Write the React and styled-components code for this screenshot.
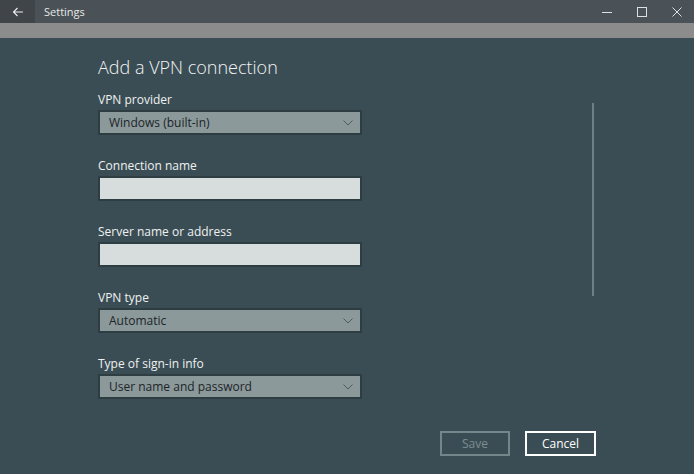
import React from "react";
import styled, { createGlobalStyle } from "styled-components";

const Global = createGlobalStyle`
  html, body { margin: 0; padding: 0; }
  body {
    width: 694px; height: 474px; overflow: hidden;
    background: #3b4d54;
    font-family: "Open Sans", "Noto Sans", "Liberation Sans", sans-serif;
  }
`;

const Window = styled.div`
  width: 694px;
  height: 474px;
  display: flex;
  flex-direction: column;
  background: #3b4d54;
`;

const TitleBar = styled.div`
  height: 23px;
  display: flex;
  align-items: center;
  background: #4a5157;
  color: #e8e8e8;
`;

const BackButton = styled.div`
  width: 35px;
  height: 23px;
  display: flex;
  align-items: center;
  justify-content: center;
  background: #3f4549;
`;

const Title = styled.div`
  margin-left: 9px;
  font-size: 11px;
  flex: 1;
`;

const CaptionButton = styled.div`
  width: 35px;
  height: 23px;
  display: flex;
  align-items: center;
  justify-content: center;
`;

const Band = styled.div`
  height: 15px;
  background: #8c8c8c;
`;

const Body = styled.div`
  flex: 1;
  display: flex;
  flex-direction: column;
  padding: 0 98px;
`;

const ScrollRow = styled.div`
  display: flex;
  height: 376px;
`;

const Form = styled.div`
  flex: 1;
  display: flex;
  flex-direction: column;
  padding-top: 16px;
`;

const Heading = styled.h1`
  margin: 0 0 12px;
  font-size: 18px;
  line-height: 26px;
  font-weight: 300;
  color: #f2f4f4;
`;

const Group = styled.div`
  display: flex;
  flex-direction: column;
  width: 264px;
  margin-bottom: 23px;
`;

const Label = styled.div`
  font-size: 12px;
  line-height: 16px;
  color: #eef1f1;
  margin-bottom: 2px;
`;

const Select = styled.div`
  box-sizing: border-box;
  height: 25px;
  display: flex;
  align-items: center;
  justify-content: space-between;
  padding: 0 7px 0 9px;
  background: #8b999b;
  border: 2px solid #2e3d42;
  font-size: 12px;
  color: #1c2427;
`;

const Input = styled.div`
  box-sizing: border-box;
  height: 25px;
  background: #d7dddd;
  border: 2px solid #2e3d42;
`;

const ScrollTrack = styled.div`
  width: 2px;
  height: 193px;
  margin-top: 65px;
  margin-right: 2px;
  background: #6f7f83;
`;

const Footer = styled.div`
  display: flex;
  justify-content: flex-end;
  gap: 15px;
  margin-top: 17px;
`;

const Button = styled.div`
  box-sizing: border-box;
  width: ${(p) => p.$w}px;
  height: 25px;
  display: flex;
  align-items: center;
  justify-content: center;
  font-size: 12px;
  border: 2px solid ${(p) => (p.$disabled ? "#74868a" : "#ffffff")};
  color: ${(p) => (p.$disabled ? "#7b8d91" : "#ffffff")};
`;

const Chevron = () => (
  <svg width="10" height="6" viewBox="0 0 10 6">
    <path d="M0.5 0.5 L5 5 L9.5 0.5" fill="none" stroke="#4d5c60" strokeWidth="1" />
  </svg>
);

const SelectField = ({ label, value }) => (
  <Group>
    <Label>{label}</Label>
    <Select>
      <span>{value}</span>
      <Chevron />
    </Select>
  </Group>
);

const TextField = ({ label }) => (
  <Group>
    <Label>{label}</Label>
    <Input />
  </Group>
);

export default function App() {
  return (
    <>
      <Global />
      <Window>
        <TitleBar>
          <BackButton>
            <svg width="12" height="10" viewBox="0 0 12 10">
              <path d="M11 5 H1.5 M5.5 1 L1.5 5 L5.5 9" fill="none" stroke="#f0f0f0" strokeWidth="1.1" />
            </svg>
          </BackButton>
          <Title>Settings</Title>
          <CaptionButton>
            <svg width="10" height="10" viewBox="0 0 10 10">
              <path d="M0 5.5 H10" stroke="#e0e0e0" strokeWidth="1" />
            </svg>
          </CaptionButton>
          <CaptionButton>
            <svg width="10" height="10" viewBox="0 0 10 10">
              <rect x="0.5" y="0.5" width="9" height="9" fill="none" stroke="#e0e0e0" strokeWidth="1" />
            </svg>
          </CaptionButton>
          <CaptionButton>
            <svg width="10" height="10" viewBox="0 0 10 10">
              <path d="M0.5 0.5 L9.5 9.5 M9.5 0.5 L0.5 9.5" stroke="#e0e0e0" strokeWidth="1" />
            </svg>
          </CaptionButton>
        </TitleBar>
        <Band />
        <Body>
          <ScrollRow>
            <Form>
              <Heading>Add a VPN connection</Heading>
              <SelectField label="VPN provider" value="Windows (built-in)" />
              <TextField label="Connection name" />
              <TextField label="Server name or address" />
              <SelectField label="VPN type" value="Automatic" />
              <SelectField label="Type of sign-in info" value="User name and password" />
            </Form>
            <ScrollTrack />
          </ScrollRow>
          <Footer>
            <Button $w={70} $disabled>Save</Button>
            <Button $w={71}>Cancel</Button>
          </Footer>
        </Body>
      </Window>
    </>
  );
}
